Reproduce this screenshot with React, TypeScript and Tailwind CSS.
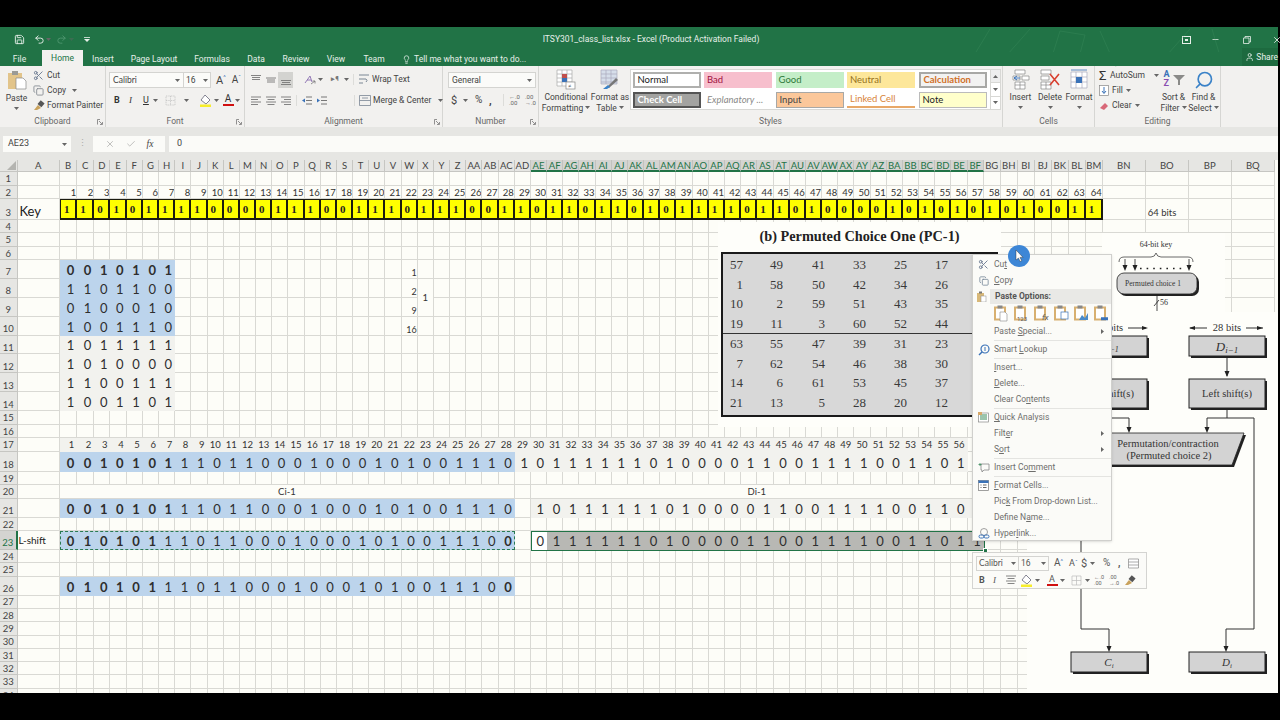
import { ReactNode } from 'react';
import { Save, Undo2, Redo2, Scissors, Copy, Lightbulb, User, X, Check, Minus, Search } from 'lucide-react';

const KEY = '1101011110000111001110' + '111001101101101011110110100' + '001010101010011';
const BLOCK: Record<number, string> = {
  7: '0010101',
  8: '1101100',
  9: '0100010',
  10: '1001110',
  11: '1011111',
  12: '1010000',
  13: '1100111',
  14: '1001101',
};
const W1 = '0010101110110001000101001110';
const W2 = '1011111101000011001111001101';
const S1 = '0101011101100010001010011100';
const S2 = '0111111010000110011110011011';

const colName = (i: number) => {
  if (i < 26) return String.fromCharCode(65 + i);
  return String.fromCharCode(64 + Math.floor(i / 26)) + String.fromCharCode(65 + (i % 26));
};

const base = 'flex items-end pb-[1px] leading-none min-w-0 overflow-hidden border-r border-b';
const plain = 'border-[#d9d9d4]';
const blue = 'bg-[#bcd4ec] border-[#bcd4ec]';
const gray = 'bg-[#f2f2ee] border-[#f2f2ee]';
const shade = 'bg-[#b8b8b4] border-[#b8b8b4]';
const digit = "justify-end pr-[2px] text-[13px] text-[#2e2e2e] font-['Lato',sans-serif]";
const small = "text-[9.5px] text-[#333] font-['Lato',sans-serif]";

function bitCell(key: string, tone: string, value: string, bold: boolean) {
  return (
    <div key={key} className={`${base} ${tone} ${digit} ${bold ? 'font-bold' : ''}`}>
      {value}
    </div>
  );
}

function cellFor(r: number, c: number) {
  const key = `${r}-${c}`;
  const n = c - 1;
  const isBit = n >= 1 && n <= 64;

  if (r === 0) {
    if (c === 0) {
      return (
        <div key={key} className="flex items-end justify-end bg-[#e6e6e3] border-r border-b border-[#c6c6c2] p-[1px]">
          <svg width="9" height="9" viewBox="0 0 9 9"><polygon points="9,0 9,9 0,9" fill="#b4b4b0" /></svg>
        </div>
      );
    }
    const picked = n >= 30 && n <= 57;
    return (
      <div
        key={key}
        className={`flex items-center justify-center pt-[1px] leading-none border-r text-[9.5px] font-['Lato',sans-serif] ${
          picked
            ? 'bg-[#d4d4d1] border-[#c2c2be] border-b-2 border-b-[#217346] text-[#217346]'
            : 'bg-[#e6e6e3] border-[#c6c6c2] border-b text-[#444]'
        }`}
      >
        {c === 1 ? 'A' : colName(c - 1)}
      </div>
    );
  }

  if (c === 0) {
    const active = r === 23;
    return (
      <div
        key={key}
        className={`flex items-end justify-center pb-[1px] leading-none text-[9.5px] border-b font-['Lato',sans-serif] ${
          active
            ? 'bg-[#d4d4d1] border-[#c2c2be] border-r-2 border-r-[#217346] text-[#217346]'
            : 'bg-[#e6e6e3] border-[#c6c6c2] border-r text-[#444]'
        }`}
      >
        {r}
      </div>
    );
  }

  // merged cells
  if (r === 20 && ((n >= 2 && n <= 28) || (n >= 31 && n <= 57))) return null;
  if (r === 9 && n === 23) return null;
  if (r === 20 && n === 1) {
    return <div key={key} className={`${base} ${plain} ${small} col-span-28 justify-center`}>Ci-1</div>;
  }
  if (r === 20 && n === 30) {
    return <div key={key} className={`${base} ${plain} ${small} col-span-28 justify-center`}>Di-1</div>;
  }
  if (r === 8 && n === 23) {
    return (
      <div key={key} className={`flex items-center justify-center leading-none border-r border-b ${plain} ${small} row-span-2`}>
        1
      </div>
    );
  }

  if (r === 3 && c === 1) {
    return <div key={key} className={`${base} ${plain} pl-[2px] text-[13px] text-[#222] font-['Lato',sans-serif]`}>Key</div>;
  }
  if (r === 3 && c === 67) {
    return <div key={key} className={`${base} ${plain} pl-[2px] ${small}`}>64 bits</div>;
  }
  if (r === 23 && c === 1) {
    return <div key={key} className={`flex items-center leading-none border-r border-b ${plain} pl-[1px] text-[10px] text-[#222] font-['Lato',sans-serif]`}>L-shift</div>;
  }

  if (isBit && r === 2) {
    return <div key={key} className={`${base} ${plain} ${small} justify-end`}>{n}</div>;
  }
  if (isBit && r === 3) {
    return (
      <div
        key={key}
        className={`flex items-center pl-[3px] pt-[1px] bg-[#ffff00] border-t border-b-2 border-r-2 border-[#1c1c10] text-[11px] font-bold text-[#222] font-['Liberation_Serif',serif] ${
          n === 1 ? 'border-l' : ''
        }`}
      >
        {KEY[n - 1]}
      </div>
    );
  }
  if (n >= 1 && n <= 7 && BLOCK[r]) {
    return (
      <div
        key={key}
        className={`${base} ${r <= 10 ? blue : gray} justify-end pr-[2px] text-[13px] text-[#2e2e2e] font-['Lato',sans-serif] ${
          r === 7 ? 'font-bold' : ''
        }`}
      >
        {BLOCK[r][n - 1]}
      </div>
    );
  }
  if (n === 22 && r >= 7 && r <= 10) {
    return (
      <div key={key} className={`${base} ${plain} justify-end text-[9px] text-[#333] font-['Lato',sans-serif]`}>
        {{ 7: '1', 8: '2', 9: '9', 10: '16' }[r]}
      </div>
    );
  }
  if (r === 17 && n >= 1 && n <= 56) {
    return <div key={key} className={`${base} ${gray} ${small} justify-end pr-[2px]`}>{n}</div>;
  }
  if (r === 18) {
    if (n >= 1 && n <= 28) return bitCell(key, blue, W1[n - 1], n <= 7);
    if (n >= 29 && n <= 56) return bitCell(key, gray, W2[n - 29], false);
  }
  if (r === 21) {
    if (n >= 1 && n <= 28) return bitCell(key, blue, W1[n - 1], n <= 7);
    if (n >= 30 && n <= 57) return bitCell(key, gray, W2[n - 30], false);
  }
  if (r === 23) {
    if (n >= 1 && n <= 28) return bitCell(key, blue, S1[n - 1], n <= 6 || n === 28);
    if (n === 30) return bitCell(key, 'bg-white border-white', S2[0], false);
    if (n > 30 && n <= 57) return bitCell(key, shade, S2[n - 30], false);
  }
  if (r === 26 && n >= 1 && n <= 28) {
    return bitCell(key, blue, S1[n - 1], n <= 6 || n === 28);
  }
  return <div key={key} className={`${base} ${plain}`} />;
}

function Caret({ className = '' }: { className?: string }) {
  return (
    <svg width="5" height="3" viewBox="0 0 5 3" className={`shrink-0 ${className}`}>
      <polygon points="0,0 5,0 2.5,3" fill="#666" />
    </svg>
  );
}

function Group({ className, label, launcher, children }: { className: string; label: string; launcher?: boolean; children: ReactNode }) {
  return (
    <div className={`relative flex flex-col border-r border-[#d6d6d3] ${className}`}>
      <div className="flex-1 min-h-0 flex">{children}</div>
      <div className="h-[14px] pt-[3px] flex items-center justify-center text-[#666]">{label}</div>
      {launcher && (
        <svg width="6" height="6" viewBox="0 0 6 6" className="absolute right-[2px] bottom-[2px]">
          <path d="M0.5 5.5V0.5H3M5.5 3V5.5H3M2 2l3 3" stroke="#777" strokeWidth="0.8" fill="none" />
        </svg>
      )}
    </div>
  );
}

function Lines({ kind }: { kind: 'l' | 'c' | 'r' | 'm' | 't' | 'b' }) {
  const rows: Record<string, string> = {
    l: 'M1 2h10M1 4.5h7M1 7h10M1 9.5h7',
    c: 'M1 2h10M2.5 4.5h7M1 7h10M2.5 9.5h7',
    r: 'M1 2h10M4 4.5h7M1 7h10M4 9.5h7',
    t: 'M1 1.5h10M2 3.5h8M2 5.5h8',
    m: 'M1 4h10M2 6h8M2 8h8',
    b: 'M1 6.5h10M2 8.5h8M1 10.5h10',
  };
  return (
    <svg width="12" height="12" viewBox="0 0 12 12">
      <path d={rows[kind]} stroke="#777" strokeWidth="0.9" fill="none" />
    </svg>
  );
}

function StyleChip({ className, children }: { className: string; children: ReactNode }) {
  return <div className={`w-[68px] h-[16px] flex items-center pl-[3px] text-[9.5px] font-['Lato',sans-serif] ${className}`}>{children}</div>;
}

function BigButton({ className, icon, lines, caretLine }: { className: string; icon: ReactNode; lines: string[]; caretLine?: boolean }) {
  return (
    <div className={`flex flex-col items-center ${className}`}>
      <div className="h-[25px] flex items-end justify-center">{icon}</div>
      <div className="mt-[2px] text-center leading-[11px]">{lines[0]}</div>
      <div className="flex items-center justify-center gap-[2px] h-[11px]">
        {lines[1]}
        {caretLine && <Caret />}
      </div>
    </div>
  );
}

function Ribbon() {
  return (
    <div className="h-[61px] flex bg-[#f2f1ef] text-[8.5px] leading-none text-[#444] whitespace-nowrap font-['Roboto',sans-serif]">
      <Group className="w-[106px]" label="Clipboard" launcher>
        <div className="w-[33px] flex flex-col items-center pt-[4px]">
          <svg width="20" height="20" viewBox="0 0 20 20">
            <rect x="1" y="3" width="14" height="16" fill="#e2c48a" />
            <rect x="5" y="1" width="6" height="4" fill="#9a9a96" />
            <path d="M9 8h7l3 3v8H9z" fill="#fff" stroke="#888" strokeWidth="0.7" />
          </svg>
          <div className="mt-[4px]">Paste</div>
          <Caret className="mt-[4px]" />
        </div>
        <div className="flex flex-col pt-[1px]">
          <div className="h-[16px] flex items-center gap-[3px]">
            <Scissors size={11} color="#6a7a90" />
            Cut
          </div>
          <div className="h-[15px] flex items-center gap-[3px]">
            <Copy size={11} color="#8a8f96" />
            Copy
            <Caret className="ml-[3px]" />
          </div>
          <div className="h-[15px] flex items-center gap-[2px]">
            <svg width="12" height="11" viewBox="0 0 12 11">
              <path d="M1 10l4-5 3 3-4 2z" fill="#c9a25c" />
              <rect x="6" y="1" width="5" height="5" transform="rotate(40 8 3)" fill="#555" />
            </svg>
            Format Painter
          </div>
        </div>
      </Group>

      <Group className="w-[139px]" label="Font" launcher>
        <div className="flex-1 flex flex-col pl-[3px] pt-[6px] gap-[5px]">
          <div className="flex items-center">
            <div className="w-[75px] h-[16px] flex items-center justify-between px-[3px] bg-[#fbfbf9] border border-[#d4d4d1]">
              <span className="font-['Lato',sans-serif]">Calibri</span>
              <Caret />
            </div>
            <div className="w-[27px] h-[16px] flex items-center justify-between px-[2px] bg-[#fbfbf9] border border-l-0 border-[#d4d4d1]">
              16
              <Caret />
            </div>
            <span className="ml-[5px] text-[11px]">A</span>
            <span className="text-[6px] -mt-[6px] text-[#3a72b8]">^</span>
            <span className="ml-[6px] text-[10px]">A</span>
            <span className="text-[6px] -mt-[6px] text-[#3a72b8]">ˇ</span>
          </div>
          <div className="flex items-center h-[14px] pl-[5px] text-[#333]">
            <span className="w-[15px] font-bold text-[9px]">B</span>
            <span className="w-[14px] italic text-[9px] font-['Liberation_Serif',serif]">I</span>
            <span className="w-[10px] underline text-[9px]">U</span>
            <Caret className="mr-[7px]" />
            <svg width="11" height="11" viewBox="0 0 11 11" className="mr-[8px]">
              <path d="M1 1h9v9H1zM5.5 1v9M1 5.5h9" stroke="#bbb" strokeWidth="0.7" strokeDasharray="1 0.7" fill="none" />
            </svg>
            <Caret className="mr-[10px]" />
            <svg width="13" height="13" viewBox="0 0 13 13" className="mr-[2px]">
              <path d="M6 1l5 5-4 4-5-4z" fill="#fff" stroke="#667" strokeWidth="0.8" />
              <rect x="1" y="10.5" width="11" height="2.5" fill="#f7ee2c" />
            </svg>
            <Caret className="mr-[3px]" />
            <div className="flex flex-col items-center w-[12px] mr-[1px]">
              <span className="text-[10px] leading-[10px]">A</span>
              <span className="h-[2.5px] w-[11px] bg-[#d01010]" />
            </div>
            <Caret />
          </div>
        </div>
      </Group>

      <Group className="w-[198px]" label="Alignment" launcher>
        <div className="flex-1 flex flex-col pl-[4px] pt-[5px] gap-[4px]">
          <div className="flex items-center h-[17px]">
            <div className="w-[14px] flex justify-center"><Lines kind="t" /></div>
            <div className="w-[15px] flex justify-center"><Lines kind="m" /></div>
            <div className="w-[15px] h-[16px] flex items-center justify-center bg-[#d3d3d0]"><Lines kind="b" /></div>
            <div className="ml-[8px] w-[16px] flex justify-center">
              <svg width="13" height="12" viewBox="0 0 13 12">
                <path d="M2 9L7 2l2 6M4 6h4" stroke="#8a6db0" strokeWidth="0.9" fill="none" />
                <path d="M8 10l4-3M12 7v2.5M12 7H9.5" stroke="#777" strokeWidth="0.8" fill="none" />
              </svg>
            </div>
            <Caret className="ml-[1px]" />
            <div className="ml-[5px] w-[14px] flex justify-center text-[7px] font-bold text-[#777]">▸¶</div>
            <Caret className="ml-[2px]" />
            <div className="ml-[4px] flex items-center gap-[2px] border-l border-[#dcdcd9] pl-[4px]">
              <svg width="12" height="11" viewBox="0 0 12 11">
                <path d="M1 1h10M1 5h7l1 1.5L8 8M1 9h4" stroke="#7a8794" strokeWidth="1" fill="none" />
              </svg>
              Wrap Text
            </div>
          </div>
          <div className="flex items-center h-[17px]">
            <div className="w-[14px] flex justify-center"><Lines kind="l" /></div>
            <div className="w-[15px] flex justify-center"><Lines kind="c" /></div>
            <div className="w-[15px] flex justify-center"><Lines kind="r" /></div>
            <div className="ml-[3px] pl-[4px] border-l border-[#dcdcd9] flex gap-[3px]">
              <svg width="12" height="11" viewBox="0 0 12 11"><path d="M5 2h6M5 5.5h6M5 9h6" stroke="#777" /><path d="M1 5.5l3-2v4z" fill="#3a72b8" /></svg>
              <svg width="12" height="11" viewBox="0 0 12 11"><path d="M5 2h6M5 5.5h6M5 9h6" stroke="#777" /><path d="M4 5.5l-3-2v4z" fill="#3a72b8" /></svg>
            </div>
            <div className="ml-[26px] pl-[4px] border-l border-[#dcdcd9] flex items-center gap-[2px]">
              <svg width="12" height="11" viewBox="0 0 12 11"><path d="M.5.5h11v10H.5zM.5 5.5h11M3 3h6" stroke="#7a8794" fill="none" strokeWidth="0.8" /></svg>
              Merge &amp; Center
              <Caret className="ml-[5px]" />
            </div>
          </div>
        </div>
      </Group>

      <Group className="w-[96px]" label="Number" launcher>
        <div className="flex-1 flex flex-col pl-[5px] pt-[6px] gap-[5px]">
          <div className="w-[88px] h-[16px] flex items-center justify-between px-[3px] bg-[#fbfbf9] border border-[#d4d4d1]">
            General
            <Caret />
          </div>
          <div className="flex items-center h-[14px] pl-[3px] text-[11px]">
            <span className="w-[12px]">$</span>
            <Caret className="mr-[7px]" />
            <span className="w-[14px] text-[10px]">%</span>
            <span className="w-[10px] font-bold">,</span>
            <div className="ml-[4px] pl-[5px] border-l border-[#dcdcd9] flex gap-[3px] text-[6px] leading-[6px] text-[#666]">
              <span className="w-[13px]">←.0<br />.00</span>
              <span className="w-[13px]">.00<br />→.0</span>
            </div>
          </div>
        </div>
      </Group>

      <Group className="w-[464px]" label="Styles">
        <BigButton
          className="w-[50px] ml-[2px]"
          lines={['Conditional', 'Formatting']}
          caretLine
          icon={
            <svg width="20" height="21" viewBox="0 0 20 21">
              <path d="M1 1h15v16H1zM1 5h15M1 9h15M1 13h15M6 1v16M11 1v16" stroke="#aaa" strokeWidth="0.7" fill="#fff" />
              <rect x="6" y="5" width="5" height="4" fill="#c0504d" />
              <rect x="6" y="9" width="5" height="4" fill="#3a72b8" />
              <rect x="10" y="13" width="9" height="7" fill="#fff" stroke="#888" strokeWidth="0.7" />
              <text x="12" y="19" fontSize="6" fill="#444">≠</text>
            </svg>
          }
        />
        <BigButton
          className="w-[38px]"
          lines={['Format as', 'Table']}
          caretLine
          icon={
            <svg width="20" height="21" viewBox="0 0 20 21">
              <path d="M1 1h16v14H1zM1 5h16M1 9h16M1 13h16M6 1v14M11 1v14" stroke="#aab" strokeWidth="0.7" fill="#d6deea" />
              <path d="M7 18l9-9 2 2-9 8z" fill="#777" />
              <path d="M3 20l5-4 2 2-3 2z" fill="#3a82c8" />
            </svg>
          }
        />
        <div className="ml-[1px] mt-[3px] w-[371px] h-[41px] flex bg-white border border-[#d8d8d5]">
          <div className="flex-1 flex flex-col justify-between p-[1.5px] pr-0">
            <div className="flex gap-[3.5px]">
              <StyleChip className="border-2 border-[#b0b0ae] text-[#222] bg-white">Normal</StyleChip>
              <StyleChip className="bg-[#f7bfcd] text-[#a01040]">Bad</StyleChip>
              <StyleChip className="bg-[#c4eec8] text-[#2e7a3a]">Good</StyleChip>
              <StyleChip className="bg-[#fde79a] text-[#94701a]">Neutral</StyleChip>
              <StyleChip className="border-2 border-[#a8a8a6] bg-[#f2f2f2] text-[#d07028] font-bold">Calculation</StyleChip>
            </div>
            <div className="flex gap-[3.5px]">
              <StyleChip className="border-2 border-[#555] bg-[#a3a3a1] text-white font-bold">Check Cell</StyleChip>
              <StyleChip className="italic text-[#8a8a88]">Explanatory ...</StyleChip>
              <StyleChip className="border border-[#a8a8a6] bg-[#fbc79a] text-[#444]">Input</StyleChip>
              <StyleChip className="border-b-2 border-[#e8a868] text-[#d8843a]">Linked Cell</StyleChip>
              <StyleChip className="border border-[#bbb] bg-[#ffffcb] text-[#222]">Note</StyleChip>
            </div>
          </div>
          <div className="w-[10px] flex flex-col border-l border-[#d8d8d5]">
            <div className="flex-1 flex items-center justify-center bg-[#eee]"><Caret className="rotate-180" /></div>
            <div className="flex-1 flex items-center justify-center border-y border-[#d8d8d5]"><Caret /></div>
            <div className="flex-1 flex items-center justify-center"><Caret /></div>
          </div>
        </div>
      </Group>

      <Group className="w-[92px]" label="Cells">
        <BigButton
          className="w-[31px] ml-[2px]"
          lines={['Insert', '']}
          caretLine
          icon={
            <svg width="20" height="21" viewBox="0 0 20 21">
              <path d="M4 1h10v4H4zM4 13h10v7H4zM9 13v7M4 16h10M2 7h7v4H2zM11 7h7v4h-7z" stroke="#888" strokeWidth="0.7" fill="#fff" />
              <path d="M9 9H3m3-2L3 9l3 2" stroke="#3a72b8" fill="none" />
            </svg>
          }
        />
        <BigButton
          className="w-[28px]"
          lines={['Delete', '']}
          caretLine
          icon={
            <svg width="22" height="21" viewBox="0 0 22 21">
              <path d="M2 1h10v4H2zM2 13h10v7H2zM7 13v7M2 16h10M2 7h8v4H2z" stroke="#888" strokeWidth="0.7" fill="#fff" />
              <path d="M11 5l9 11M20 5l-9 11" stroke="#d84030" strokeWidth="1.6" />
            </svg>
          }
        />
        <BigButton
          className="w-[30px]"
          lines={['Format', '']}
          caretLine
          icon={
            <svg width="20" height="21" viewBox="0 0 20 21">
              <path d="M2 3h16v16H2zM7 3v16M13 3v16M2 8h16M2 13h16" stroke="#aab" strokeWidth="0.7" fill="#fff" />
              <rect x="7" y="8" width="6" height="6" fill="#3a72b8" />
              <path d="M2 1h16" stroke="#3a72b8" strokeWidth="0.8" />
            </svg>
          }
        />
      </Group>

      <Group className="w-[126px]" label="Editing">
        <div className="w-[64px] flex flex-col pl-[4px] pt-[1px]">
          <div className="h-[16px] flex items-center gap-[2px]">
            <span className="text-[13px] text-[#333] w-[11px]">Σ</span>
            AutoSum
            <Caret className="ml-[7px]" />
          </div>
          <div className="h-[15px] flex items-center gap-[3px]">
            <svg width="10" height="11" viewBox="0 0 10 11"><rect x=".5" y=".5" width="9" height="10" fill="#fff" stroke="#888" strokeWidth="0.7" /><path d="M5 2v6M3 6l2 2.5L7 6" stroke="#3a72b8" fill="none" /></svg>
            Fill
            <Caret />
          </div>
          <div className="h-[15px] flex items-center gap-[3px]">
            <svg width="10" height="10" viewBox="0 0 10 10"><path d="M1 7l5-5 3 3-4 4z" fill="#d86878" /></svg>
            Clear
            <Caret />
          </div>
        </div>
        <BigButton
          className="w-[29px]"
          lines={['Sort &', 'Filter']}
          caretLine
          icon={
            <div className="relative w-[22px] h-[20px] flex flex-col text-[9px] leading-[9px] pl-[1px] font-bold">
              <span className="text-[#3a72b8]">A</span>
              <span className="text-[#8a4db0]">Z</span>
              <svg width="12" height="10" viewBox="0 0 12 10" className="absolute right-0 top-[5px]"><path d="M0 0h12L7 5v5H5V5z" fill="#8a8a88" /></svg>
            </div>
          }
        />
        <BigButton
          className="w-[31px]"
          lines={['Find &', 'Select']}
          caretLine
          icon={<Search size={20} color="#3a82c8" strokeWidth={2} className="-scale-x-100" />}
        />
      </Group>
      <div className="flex-1" />
    </div>
  );
}

function MenuRow({ pre, u, post, icon, arrow }: { pre?: string; u: string; post?: string; icon?: ReactNode; arrow?: boolean }) {
  return (
    <div className="h-[16px] flex items-center">
      <div className="w-[21px] flex justify-center">{icon}</div>
      <span>
        {pre}
        <u>{u}</u>
        {post}
      </span>
      {arrow && (
        <svg width="3" height="5" viewBox="0 0 3 5" className="ml-auto mr-[7px]">
          <polygon points="0,0 3,2.5 0,5" fill="#666" />
        </svg>
      )}
    </div>
  );
}

function PasteOpt({ children }: { children?: ReactNode }) {
  return (
    <svg width="15" height="17" viewBox="0 0 15 17">
      <rect x="1" y="2.5" width="10" height="12" fill="#fff" stroke="#d8b070" strokeWidth="2" />
      <rect x="3.5" y="0.5" width="5" height="3" fill="#888" />
      {children}
    </svg>
  );
}

const Sep = () => <div className="h-[1px] ml-[21px] my-[.5px] bg-[#e4e4e1]" />;

function ContextMenu() {
  return (
    <div className="absolute left-[972px] top-[254px] w-[140px] h-[287px] pt-[1.5px] bg-[#fbfbf8] border border-[#d0d0cd] shadow-sm text-[8.5px] leading-none text-[#6e6e6c] whitespace-nowrap font-['Roboto',sans-serif]">
      <MenuRow pre="Cu" u="t" icon={<Scissors size={11} color="#6a7a90" />} />
      <MenuRow u="C" post="opy" icon={<Copy size={10} color="#7a8a9a" />} />
      <div className="h-[15px] flex items-center">
        <div className="w-[17px] flex justify-center">
          <svg width="11" height="11" viewBox="0 0 11 11"><rect x="1" y="2" width="7" height="9" fill="#d8b878" /><rect x="3" y="0.5" width="3" height="2" fill="#777" /><rect x="5" y="5" width="5" height="6" fill="#fff" stroke="#888" strokeWidth="0.5" /></svg>
        </div>
        <div className="flex-1 h-full flex items-center pl-[5px] bg-[#e9e9e6] font-bold text-[#555]">Paste Options:</div>
      </div>
      <div className="h-[20px] pl-[21px] flex items-center gap-[5px]">
        <PasteOpt><path d="M6 7h5l2 2v7H6z" fill="#fff" stroke="#888" strokeWidth="0.6" /></PasteOpt>
        <PasteOpt><text x="3" y="16" fontSize="6" fill="#555">123</text></PasteOpt>
        <PasteOpt><text x="8" y="15" fontSize="8" fontStyle="italic" fill="#555">fx</text></PasteOpt>
        <PasteOpt><rect x="7" y="7" width="7" height="7" fill="#fff" stroke="#3a72b8" strokeWidth="0.7" /></PasteOpt>
        <PasteOpt><path d="M5 15l3-5 3 3 3-5v7z" fill="#4a8ac8" /></PasteOpt>
        <PasteOpt><path d="M7 13h7M7 14.5h7" stroke="#3a72b8" strokeWidth="1.5" /></PasteOpt>
      </div>
      <MenuRow pre="Paste " u="S" post="pecial..." arrow />
      <Sep />
      <MenuRow
        pre="Smart "
        u="L"
        post="ookup"
        icon={
          <svg width="12" height="12" viewBox="0 0 12 12"><circle cx="7" cy="5" r="4" fill="none" stroke="#3a72b8" strokeWidth="1.2" /><path d="M4 8l-3 3" stroke="#3a72b8" strokeWidth="1.4" /><path d="M7 3v4" stroke="#3a72b8" /></svg>
        }
      />
      <Sep />
      <MenuRow u="I" post="nsert..." />
      <MenuRow u="D" post="elete..." />
      <MenuRow pre="Clear Co" u="n" post="tents" />
      <Sep />
      <MenuRow
        u="Q"
        post="uick Analysis"
        icon={
          <svg width="11" height="11" viewBox="0 0 11 11"><rect x=".5" y="1" width="10" height="9" fill="#fff" stroke="#888" strokeWidth="0.7" /><path d="M2 3h7M2 5h7M2 7h7" stroke="#3a8a5a" /><rect x="0" y="0" width="4" height="3" fill="#d8a868" /></svg>
        }
      />
      <MenuRow pre="Filt" u="e" post="r" arrow />
      <MenuRow pre="S" u="o" post="rt" arrow />
      <Sep />
      <MenuRow
        pre="Insert Co"
        u="m"
        post="ment"
        icon={
          <svg width="12" height="11" viewBox="0 0 12 11"><path d="M3 2h8v6H6L4 10V8H3z" fill="none" stroke="#888" strokeWidth="0.8" /><path d="M2 1v3M.5 2.5h3" stroke="#3a8a5a" strokeWidth="0.8" /></svg>
        }
      />
      <Sep />
      <MenuRow
        u="F"
        post="ormat Cells..."
        icon={
          <svg width="11" height="11" viewBox="0 0 11 11"><rect x=".5" y=".5" width="10" height="10" fill="#fff" stroke="#777" strokeWidth="0.7" /><rect x=".5" y=".5" width="10" height="2.5" fill="#3a72b8" /><path d="M2.5 5h1M5 5h3.5M2.5 7.5h1M5 7.5h3.5" stroke="#666" /></svg>
        }
      />
      <MenuRow pre="Pic" u="k" post=" From Drop-down List..." />
      <MenuRow pre="Define N" u="a" post="me..." />
      <MenuRow
        pre="Hyper"
        u="l"
        post="ink..."
        icon={
          <svg width="12" height="12" viewBox="0 0 12 12"><circle cx="6" cy="4" r="3.5" fill="none" stroke="#888" strokeWidth="0.8" /><rect x="1" y="7" width="5" height="3" rx="1.5" fill="none" stroke="#3a72b8" /><rect x="6" y="7" width="5" height="3" rx="1.5" fill="none" stroke="#3a72b8" /></svg>
        }
      />
    </div>
  );
}

function MiniBar() {
  return (
    <div className="absolute left-[972px] top-[552px] w-[175px] h-[37px] px-[3px] pt-[2px] flex flex-col gap-[2px] bg-[#fbfbf8] border border-[#d4d4d1] text-[8.5px] leading-none text-[#555] whitespace-nowrap font-['Roboto',sans-serif]">
      <div className="flex items-center h-[16px]">
        <div className="w-[43px] h-[15px] flex items-center justify-between px-[2px] border border-[#d4d4d1]">
          <span className="font-['Lato',sans-serif]">Calibri</span>
          <Caret />
        </div>
        <div className="w-[30px] h-[15px] flex items-center justify-between px-[2px] border border-l-0 border-[#d4d4d1]">
          16
          <Caret />
        </div>
        <span className="ml-[5px] w-[14px] text-[10px]">A<span className="text-[#3a72b8] text-[6px] align-top">^</span></span>
        <span className="ml-[1px] w-[12px] text-[9px]">A<span className="text-[#3a72b8] text-[6px] align-top">ˇ</span></span>
        <span className="w-[9px] text-[11px]">$</span>
        <Caret className="mr-[8px]" />
        <span className="w-[15px] text-[10px]">%</span>
        <span className="w-[10px] font-bold text-[10px]">,</span>
        <svg width="11" height="11" viewBox="0 0 11 11"><path d="M.5 1h10v9H.5zM.5 4h10M.5 7h10" stroke="#888" strokeWidth="0.7" fill="#fff" /></svg>
      </div>
      <div className="flex items-center h-[14px]">
        <span className="w-[15px] pl-[3px] font-bold text-[9px]">B</span>
        <span className="w-[14px] pl-[2px] italic text-[9px] font-['Liberation_Serif',serif]">I</span>
        <div className="w-[15px]"><Lines kind="c" /></div>
        <svg width="13" height="13" viewBox="0 0 13 13" className="mr-[2px]"><path d="M6 1l5 5-4 4-5-4z" fill="#fff" stroke="#667" strokeWidth="0.8" /><rect x="1" y="10.5" width="11" height="2.5" fill="#f7ee2c" /></svg>
        <Caret className="mr-[6px]" />
        <div className="flex flex-col items-center w-[12px] mr-[2px]">
          <span className="text-[9px] leading-[10px]">A</span>
          <span className="h-[2.5px] w-[11px] bg-[#d01010]" />
        </div>
        <Caret className="mr-[6px]" />
        <svg width="11" height="11" viewBox="0 0 11 11" className="mr-[3px]"><path d="M1 1h9v9H1zM5.5 1v9M1 5.5h9" stroke="#bbb" strokeWidth="0.7" fill="none" /></svg>
        <Caret className="mr-[4px]" />
        <span className="w-[14px] text-[5.5px] leading-[6px] text-[#666]">←.0<br />.00</span>
        <span className="w-[15px] ml-[1px] text-[5.5px] leading-[6px] text-[#666]">.00<br />→.0</span>
        <svg width="12" height="11" viewBox="0 0 12 11"><path d="M1 10l4-5 3 3-4 2z" fill="#c9a25c" /><rect x="6" y="1" width="5" height="5" transform="rotate(40 8 3)" fill="#555" /></svg>
      </div>
    </div>
  );
}

const PC1 = [
  [57, 49, 41, 33, 25, 17],
  [1, 58, 50, 42, 34, 26],
  [10, 2, 59, 51, 43, 35],
  [19, 11, 3, 60, 52, 44],
  [63, 55, 47, 39, 31, 23],
  [7, 62, 54, 46, 38, 30],
  [14, 6, 61, 53, 45, 37],
  [21, 13, 5, 28, 20, 12],
];

function Pc1Picture() {
  return (
    <div className="absolute left-[718px] top-[222px] w-[283px] h-[205px] bg-[#fefefa] font-['Liberation_Serif',serif]">
      <div className="h-[30px] flex items-center justify-center text-[14.3px] font-bold text-[#222]">(b) Permuted Choice One (PC-1)</div>
      <div className="ml-[3px] w-[277px] h-[165px] flex flex-col bg-[#d8d8d8] border-2 border-[#1a1a1a] text-[13px] leading-none text-[#3a3a3a]">
        {[PC1.slice(0, 4), PC1.slice(4)].map((part, i) => (
          <div key={i} className={i === 1 ? 'border-t-[1.5px] border-[#333]' : 'h-[79px] pt-[1px]'}>
            {part.map((row, j) => (
              <div key={j} className="h-[19.5px] grid items-center grid-cols-[20px_40px_42px_41px_41px_41px]">
                {row.map((v) => (
                  <span key={v} className="text-right">{v}</span>
                ))}
              </div>
            ))}
          </div>
        ))}
      </div>
    </div>
  );
}

function DiagBox({ x, y, w, h }: { x: number; y: number; w: number; h: number }) {
  return (
    <>
      <rect x={x + 2} y={y + 2} width={w} height={h} fill="#222" />
      <rect x={x} y={y} width={w} height={h} fill="#d3d3d3" stroke="#222" strokeWidth="1" />
    </>
  );
}

function Tip({ x, y }: { x: number; y: number }) {
  return <polygon points={`${x - 2.5},${y - 6} ${x + 2.5},${y - 6} ${x},${y}`} fill="#222" />;
}

function TopPicture() {
  return (
    <div className="absolute left-[1102px] top-[233px] w-[123px] h-[79px] bg-[#fefefa]">
      <svg width="123" height="79" viewBox="1102 233 123 79" className="block">
        <text x="1156" y="247" textAnchor="middle" fontSize="8" fontFamily="Liberation Serif" fill="#333">64-bit key</text>
        <path d="M1119 262q0-5 5-5h27q4 0 5-4q1 4 5 4h27q5 0 5 5" stroke="#444" strokeWidth="0.8" fill="none" />
        <path d="M1125 259v9M1135 259v9M1189 259v9" stroke="#222" strokeWidth="0.8" />
        <Tip x={1125} y={271} />
        <Tip x={1135} y={271} />
        <Tip x={1189} y={271} />
        <path d="M1140 268.5h46" stroke="#222" strokeWidth="1.6" strokeDasharray="1.6 5" />
        <rect x="1119" y="275" width="80" height="21" rx="7" fill="#222" />
        <rect x="1117" y="273" width="80" height="21" rx="7" fill="#d3d3d3" stroke="#222" strokeWidth="0.8" />
        <text x="1153" y="286" textAnchor="middle" fontSize="7.5" fontFamily="Liberation Serif" fill="#333">Permuted choice 1</text>
        <path d="M1157 294v17M1154 306l5-6" stroke="#222" strokeWidth="0.8" />
        <text x="1160" y="305" fontSize="8" fontFamily="Liberation Serif" fill="#333">56</text>
      </svg>
    </div>
  );
}

function FlowPicture() {
  const t = { fontFamily: 'Liberation Serif', fill: '#333', textAnchor: 'middle' as const };
  return (
    <div className="absolute left-[1027px] top-[312px] w-[251px] h-[381px] bg-[#fefefa]">
      <svg width="251" height="381" viewBox="1027 312 251 381" className="block">
        <text x="1109" y="331" fontSize="10.5" {...t}>28 bits</text>
        <path d="M1128 328h18" stroke="#333" />
        <polygon points="1148,328 1142,326 1142,330" fill="#222" />
        <text x="1227" y="331" fontSize="10.5" {...t}>28 bits</text>
        <path d="M1190 328h17M1246 328h17" stroke="#333" />
        <polygon points="1189,328 1195,326 1195,330" fill="#222" />
        <polygon points="1263,328 1257,326 1257,330" fill="#222" />

        <DiagBox x={1071} y={336} w={76} h={20} />
        <text x="1109" y="350" fontSize="12" fontStyle="italic" {...t}>C<tspan fontSize="8" dy="2">i−1</tspan></text>
        <DiagBox x={1189} y={336} w={76} h={20} />
        <text x="1227" y="351" fontSize="13" fontStyle="italic" {...t}>D<tspan fontSize="9" dy="2">i−1</tspan></text>

        <path d="M1227 358v18M1109 358v18" stroke="#333" />
        <Tip x={1227} y={377} />
        <Tip x={1109} y={377} />

        <DiagBox x={1071} y={379} w={76} h={29} />
        <text x="1109" y="397" fontSize="10.5" {...t}>Left shift(s)</text>
        <DiagBox x={1189} y={379} w={76} h={29} />
        <text x="1227" y="397" fontSize="10.5" {...t}>Left shift(s)</text>

        <path d="M1227 410v8M1207 427v-9h47v211h-28v20M1081 409v9h48v9M1081 418V629h28v20" stroke="#333" fill="none" />
        <Tip x={1207} y={433} />
        <Tip x={1129} y={433} />
        <Tip x={1226} y={652} />
        <Tip x={1109} y={652} />

        <polygon points="1098,435 1246,435 1234,467 1086,467" fill="#222" />
        <polygon points="1096,433 1244,433 1232,465 1084,465" fill="#d3d3d3" stroke="#222" strokeWidth="0.8" />
        <text x="1168" y="447" fontSize="10.5" {...t}>Permutation/contraction</text>
        <text x="1169" y="459" fontSize="10.5" {...t}>(Permuted choice 2)</text>

        <DiagBox x={1071} y={652} w={76} h={20} />
        <text x="1109" y="666" fontSize="11" fontStyle="italic" {...t}>C<tspan fontSize="7" dy="2">i</tspan></text>
        <DiagBox x={1189} y={652} w={76} h={20} />
        <text x="1227" y="666" fontSize="11" fontStyle="italic" {...t}>D<tspan fontSize="7" dy="2">i</tspan></text>
      </svg>
    </div>
  );
}

export default function App() {
  const rows = Array.from({ length: 35 }, (_, r) => r);
  const cols = Array.from({ length: 70 }, (_, c) => c);

  return (
    <div className="relative w-[1280px] h-[720px] overflow-hidden bg-black pt-[27px] pr-[2px] pb-[27px] flex flex-col">
      {/* title bar */}
      <div className="relative h-[25px] shrink-0 flex items-center pl-[14px] bg-[#217346] text-[#e6efe9] whitespace-nowrap font-['Roboto',sans-serif]">
        <svg width="300" height="40" viewBox="0 0 300 40" className="absolute left-[950px] top-0 opacity-25">
          <path d="M20 35L40 2M50 36L80 2M100 36l10-32 25 4-8 30zM150 4l16 36M210 36l30-34M262 2l10 34" stroke="#4a9a6a" fill="none" />
        </svg>
        <Save size={11} color="#e8f0ea" />
        <Undo2 size={11} color="#e8f0ea" className="ml-[9px]" />
        <Caret className="ml-[1px]" />
        <Redo2 size={11} color="#4f9670" className="ml-[5px]" />
        <Caret className="ml-[2px] opacity-40" />
        <svg width="6" height="5" viewBox="0 0 6 5" className="ml-[10px]">
          <path d="M0 .5h6" stroke="#e8f0ea" strokeWidth="0.8" />
          <polygon points="0,2 6,2 3,5" fill="#e8f0ea" />
        </svg>
        <div className="flex-1 text-center text-[8.5px] pl-[30px]">ITSY301_class_list.xlsx - Excel (Product Activation Failed)</div>
        <svg width="9" height="8" viewBox="0 0 9 8" className="mr-[20px]"><rect x=".5" y=".5" width="8" height="7" fill="none" stroke="#e8f0ea" /><path d="M3 3h3v2H3z" fill="#e8f0ea" /></svg>
        <Minus size={9} color="#e8f0ea" className="mr-[23px]" />
        <svg width="8" height="8" viewBox="0 0 8 8" className="mr-[21px]"><path d="M2 2V.5h5.5V6H6M.5 2H6v5.5H.5z" fill="none" stroke="#e8f0ea" strokeWidth="0.8" /></svg>
        <X size={10} color="#e8f0ea" className="mr-[-4px]" />
      </div>

      {/* tabs */}
      <div className="relative h-[14px] shrink-0 flex items-stretch bg-[#217346] text-[8.5px] leading-none text-[#e6efe9] whitespace-nowrap font-['Roboto',sans-serif]">
        <div className="w-[39px] mr-[3px] flex items-center justify-center">File</div>
        <div className="w-[41px] -mt-[2px] h-[16px] flex items-center justify-center bg-[#f2f1ef] text-[#217346]">Home</div>
        <div className="w-[40px] flex items-center justify-center">Insert</div>
        <div className="w-[62px] flex items-center justify-center">Page Layout</div>
        <div className="w-[54px] flex items-center justify-center">Formulas</div>
        <div className="w-[34px] flex items-center justify-center">Data</div>
        <div className="w-[46px] flex items-center justify-center">Review</div>
        <div className="w-[34px] flex items-center justify-center">View</div>
        <div className="w-[42px] flex items-center justify-center">Team</div>
        <div className="ml-[7px] flex items-center gap-[3px]">
          <Lightbulb size={9} color="#e6efe9" />
          Tell me what you want to do...
        </div>
        <div className="absolute right-0 -top-[4px] h-[18px] w-[36px] pl-[3px] flex items-center gap-[2px] bg-[#1d6a3f]">
          <User size={10} color="#e6efe9" />
          Share
        </div>
      </div>

      <Ribbon />

      {/* formula bar */}
      <div className="h-[33px] shrink-0 pt-[9px] pb-[8px] flex items-stretch bg-[#e6e6e3] text-[9px] text-[#444] font-['Roboto',sans-serif]">
        <div className="ml-[3px] w-[68px] flex items-center justify-between pl-[5px] pr-[4px] bg-[#fbfbf8]">
          AE23
          <Caret />
        </div>
        <div className="w-[22px] flex items-center justify-center text-[#aaa]">⋮</div>
        <div className="w-[72px] flex items-center justify-around px-[6px] bg-[#fbfbf8]">
          <X size={10} color="#b5b5b3" />
          <Check size={10} color="#b5b5b3" />
          <span className="italic font-['Liberation_Serif',serif] text-[9.5px]">fx</span>
        </div>
        <div className="ml-[4px] flex-1 flex items-center pl-[8px] bg-[#fbfbf8]">0</div>
      </div>

      {/* sheet */}
      <div className="flex-1 min-h-0 overflow-hidden bg-[#fdfdf8]">
        <div className="grid grid-cols-[17.5px_42.5px_17.3px_17px_repeat(55,16.18px)_repeat(7,17px)_repeat(4,43px)] grid-rows-[12px_13.5px_13.5px_20.5px_13.5px_13.5px_13.5px_repeat(8,18.9px)_13.5px_13.5px_13.5px_20px_13.5px_13.5px_19px_13.5px_18.5px_13.5px_13.5px_19px_repeat(8,13.3px)]">
          {rows.map((r) => cols.map((c) => cellFor(r, c)))}
        </div>
      </div>

      {/* copy marquee and active selection sit over the grid */}
      <div className="absolute left-[60px] top-[531px] w-[455px] h-[19px] border-[1.5px] border-dashed border-[#2a7a52]" />
      <div className="absolute left-[531px] top-[531px] w-[454px] h-[19.5px] border-[1.5px] border-[#217346]" />
      <div className="absolute left-[983px] top-[548px] w-[5px] h-[5px] bg-[#217346] border border-white" />

      <Pc1Picture />
      <TopPicture />
      <FlowPicture />
      <ContextMenu />
      <MiniBar />

      <div className="absolute left-[1008px] top-[245px] w-[22px] h-[22px] flex items-center justify-center rounded-full bg-[#3d86d6]">
        <svg width="9" height="12" viewBox="0 0 9 12">
          <path d="M1 0v10l2.5-2 1.6 3.5 1.6-.8L5 7.4h3z" fill="#fff" stroke="#222" strokeWidth="0.4" />
        </svg>
      </div>
    </div>
  );
}
